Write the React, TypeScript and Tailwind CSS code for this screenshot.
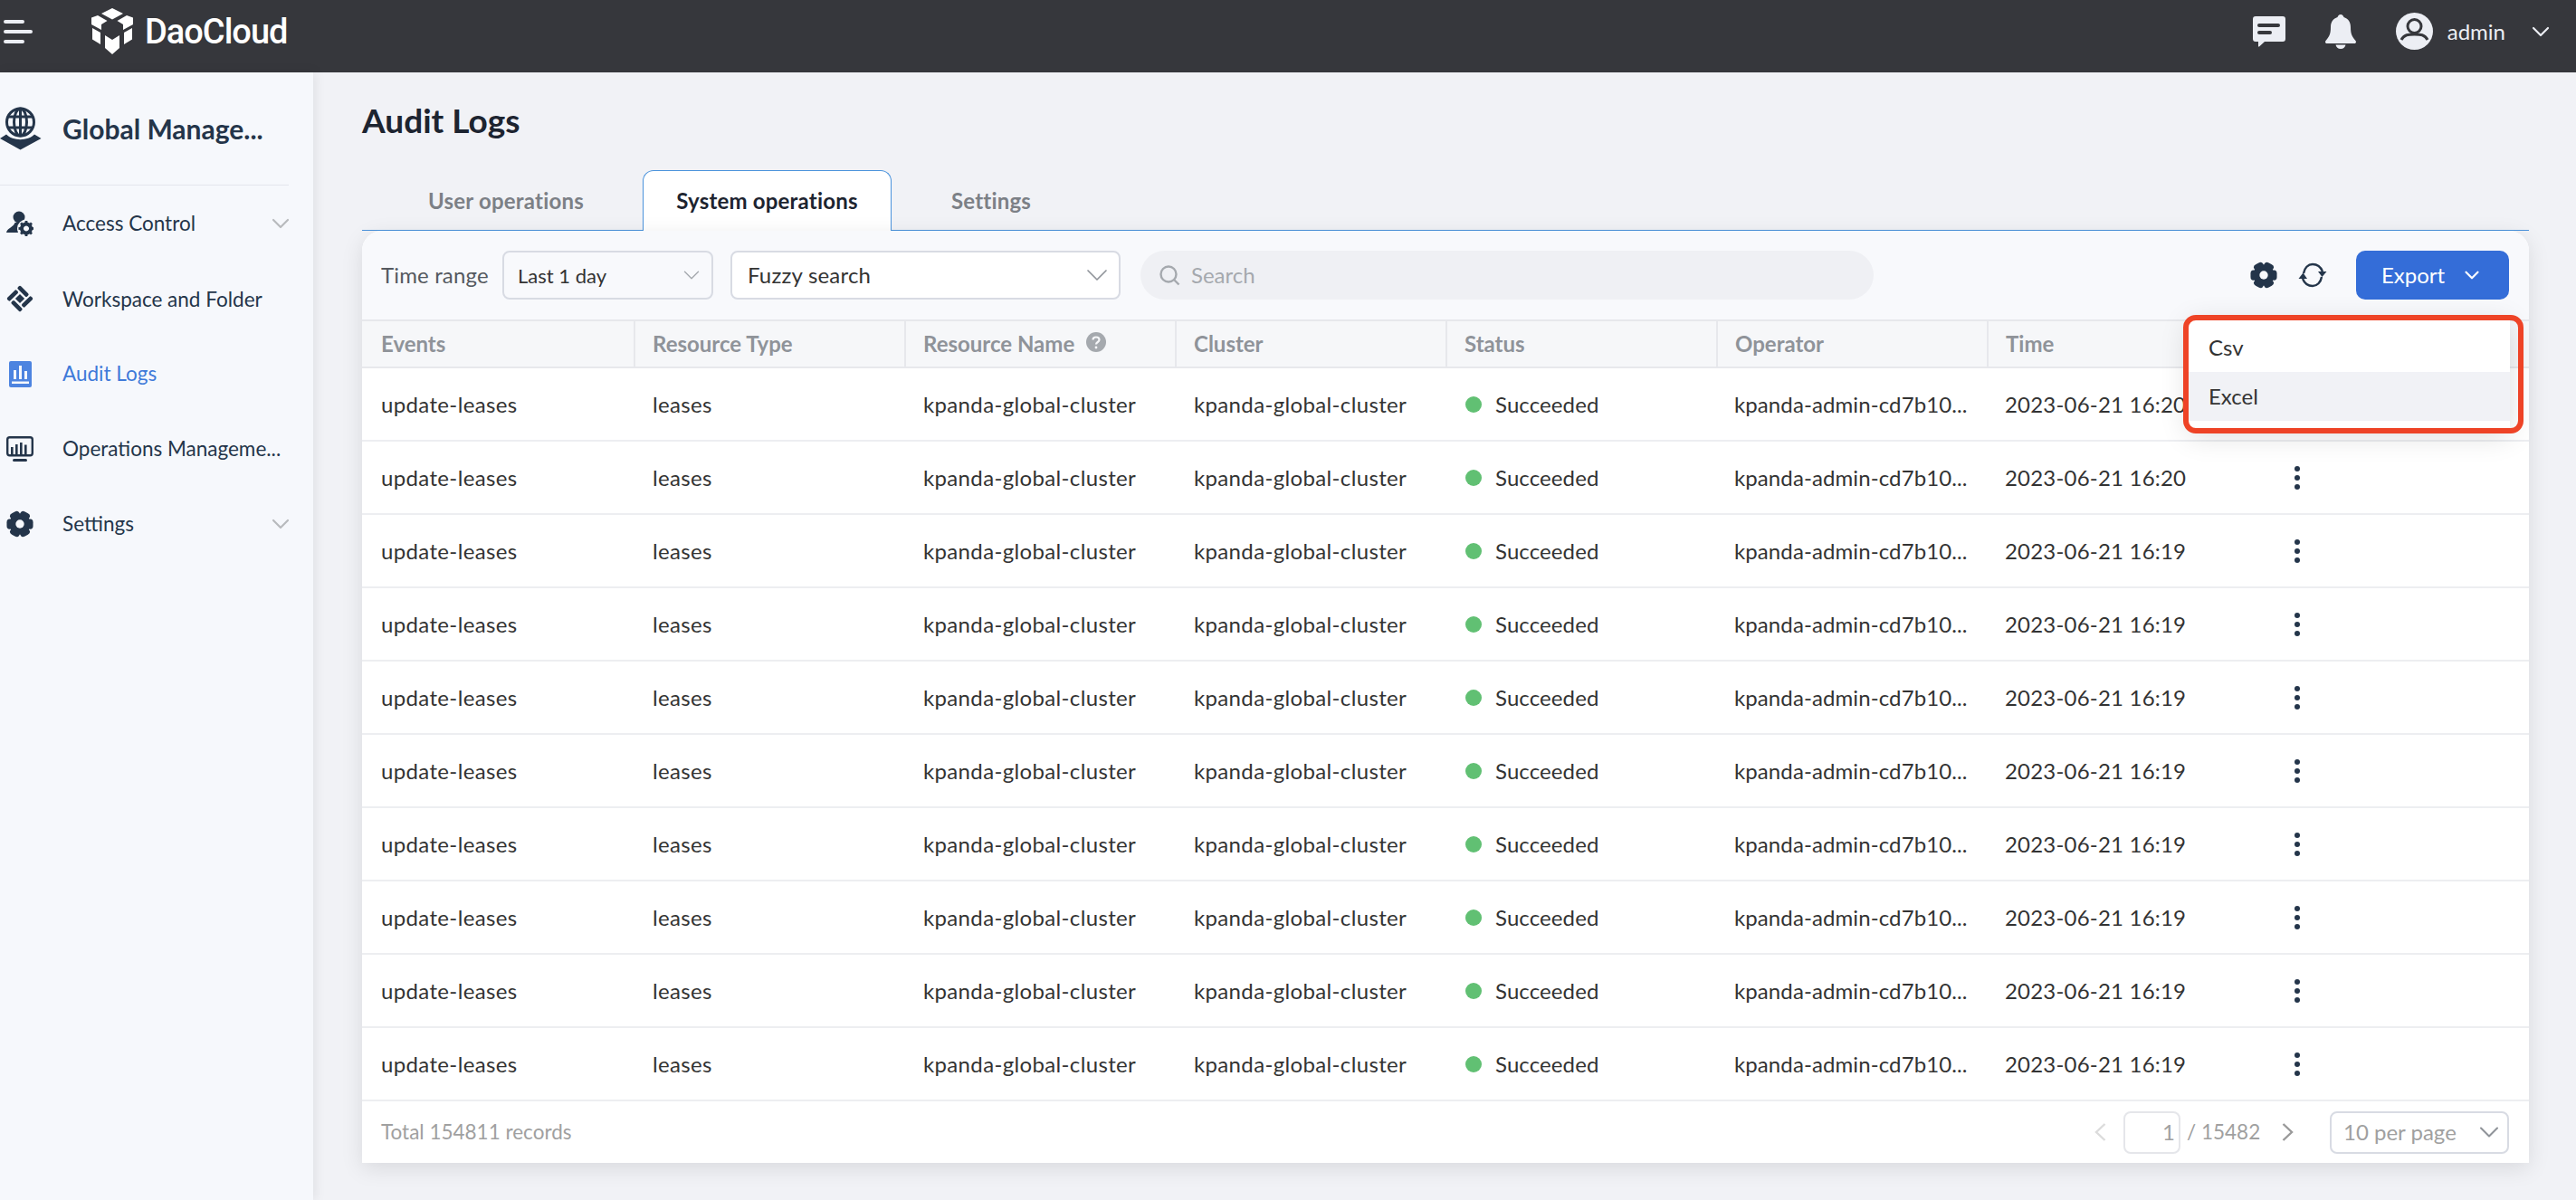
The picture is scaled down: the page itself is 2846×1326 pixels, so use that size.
import { ChevronDown } from "lucide-react";

const columns = ["Events", "Resource Type", "Resource Name", "Cluster", "Status", "Operator", "Time"];
const gridCols = "grid grid-cols-[302px_299px_299px_299px_299px_299px_299px_1fr]";

const times = [
  "2023-06-21 16:20",
  "2023-06-21 16:20",
  "2023-06-21 16:19",
  "2023-06-21 16:19",
  "2023-06-21 16:19",
  "2023-06-21 16:19",
  "2023-06-21 16:19",
  "2023-06-21 16:19",
  "2023-06-21 16:19",
  "2023-06-21 16:19",
];

const GearIcon = ({ className, hole }: { className: string; hole: string }) => (
  <svg viewBox="0 0 32 32" className={className}>
    <g fill="#24354a">
      <circle cx="16" cy="16" r="12.5" />
      {[0, 60, 120, 180, 240, 300].map((a) => (
        <rect key={a} x="25" y="10" width="6.5" height="12" rx="4" transform={`rotate(${a} 16 16)`} />
      ))}
    </g>
    <circle cx="16" cy="16" r="5" fill={hole} />
  </svg>
);

const LogoIcon = () => (
  <svg viewBox="0 0 48 52" className="w-[48px] h-[52px]" fill="#fff">
    <path d="M24 0 L36 6 L24 12.5 L12 6 Z" />
    <path d="M8 8 L18.5 14 L12 18 L12 24 L1 18 L1 10.5 Z" />
    <path d="M40 8 L47 10.5 L47 18 L36 24 L36 18 L29.5 14 Z" />
    <path d="M2 22 L11 27 L11 40 L2 34.5 Z" />
    <path d="M46 22 L46 34.5 L37 40 L37 27 Z" />
    <path d="M16 30 L24 35 L32 30 L32 44 L24 51 L16 44 Z" />
  </svg>
);

const GlobeIcon = () => (
  <svg viewBox="0 0 46 48" className="w-[46px] h-[48px]">
    <g fill="none" stroke="#24354a" strokeWidth="3">
      <circle cx="22.5" cy="17" r="15" />
      <ellipse cx="22.5" cy="17" rx="7" ry="15" />
      <path d="M9 11 H36 M9 23 H36 M22.5 2 V32" />
    </g>
    <path d="M0 35 L7 30.5 C14 38 31 38 38 30.5 L45.5 35 L22.5 47.5 Z" fill="#24354a" />
  </svg>
);

const AccessIcon = () => (
  <svg viewBox="0 0 30 28" className="w-[30px] h-[28px]">
    <circle cx="14" cy="7" r="6.5" fill="#24354a" />
    <path d="M0 24 C1 19 8 18 9.5 13 L18 13 C18.5 17 19 20 19 24 Z" fill="#24354a" />
    <circle cx="22" cy="19.5" r="10" fill="#f6f8fc" />
    <g fill="#24354a">
      <path
        d="M22 12.5 a7 7 0 1 0 0.01 0 Z M22 16.5 a3 3 0 1 1 -0.01 0 Z"
        fillRule="evenodd"
      />
      {[0, 45, 90, 135, 180, 225, 270, 315].map((a) => (
        <rect key={a} x="20.6" y="11" width="2.8" height="2.6" transform={`rotate(${a} 22 19.5)`} />
      ))}
    </g>
  </svg>
);

const WorkspaceIcon = () => (
  <svg viewBox="-15 -15 30 30" className="w-[30px] h-[30px]" fill="#24354a">
    <g transform="rotate(45)">
      <rect x="-3.6" y="-3.6" width="7.2" height="7.2" />
      <rect x="-10.5" y="-10.5" width="14.5" height="4.6" rx="1.6" />
      <rect x="5.9" y="-10.5" width="4.6" height="14.5" rx="1.6" />
      <rect x="-4" y="5.9" width="14.5" height="4.6" rx="1.6" />
      <rect x="-10.5" y="-4" width="4.6" height="14.5" rx="1.6" />
    </g>
  </svg>
);

const AuditIcon = () => (
  <svg viewBox="0 0 25 29" className="w-[25px] h-[29px]">
    <rect width="25" height="29" rx="2" fill="#4d84e0" />
    <g fill="#f6f8fc">
      <rect x="5" y="10" width="3" height="10" />
      <rect x="11" y="5" width="3" height="15" />
      <rect x="17" y="11" width="3" height="9" />
      <rect x="3" y="22.5" width="19" height="2.5" />
    </g>
  </svg>
);

const OperationsIcon = () => (
  <svg viewBox="0 0 30 28" className="w-[30px] h-[28px]">
    <rect x="1.2" y="1.2" width="27.6" height="20" rx="2.5" fill="none" stroke="#24354a" strokeWidth="2.4" />
    <g fill="#24354a">
      <rect x="5" y="12" width="2.6" height="8" />
      <rect x="10" y="9" width="2.6" height="11" />
      <rect x="15" y="7" width="2.6" height="13" />
      <rect x="20" y="9.5" width="2.6" height="10.5" />
      <rect x="7" y="25" width="16" height="3" rx="1.5" />
    </g>
  </svg>
);

const RefreshIcon = () => (
  <svg viewBox="0 0 32 28" className="w-[32px] h-[28px]" fill="none" stroke="#24354a" strokeWidth="2.4">
    <path d="M6 12 C7 6 11 2 16 2 C21 2 25 5 27 10" />
    <path d="M26 16 C25 22 21 26 16 26 C11 26 7 23 5 18" />
    <path d="M31.5 10 L26.5 16 L22 10 Z" fill="#24354a" stroke="none" />
    <path d="M0.5 18 L5.5 11.5 L10 18 Z" fill="#24354a" stroke="none" />
  </svg>
);

const HelpIcon = () => (
  <svg viewBox="0 0 22 22" className="w-[22px] h-[22px] -mt-[4px]">
    <circle cx="11" cy="11" r="11" fill="#a5a9ae" />
    <path d="M7.5 8.5 C7.5 4.5 14.5 4.5 14.5 8.5 C14.5 11 11 11 11 13.5" fill="none" stroke="#f6f7f9" strokeWidth="2.2" />
    <circle cx="11" cy="17" r="1.4" fill="#f6f7f9" />
  </svg>
);

const ChatIcon = () => (
  <svg viewBox="0 0 36 34" className="w-[36px] h-[34px]">
    <path d="M3 0 H33 C35 0 36 1 36 3 V25 C36 27 35 28 33 28 H13 L7 33.5 C6 34 6 33 6 32 V28 H3 C1 28 0 27 0 25 V3 C0 1 1 0 3 0 Z" fill="#eceef4" />
    <rect x="5" y="8" width="25" height="4" rx="2" fill="#36373c" />
    <rect x="5" y="16" width="16" height="4" rx="2" fill="#36373c" />
  </svg>
);

const BellIcon = () => (
  <svg viewBox="0 0 34 38" className="w-[34px] h-[38px]" fill="#eceef4">
    <path d="M17 0 C19 0 20 1.5 20.5 3 C25 4.5 28 8 28 14 C28 22 30 25 33.5 29 C34.5 30.5 34 32 32 32 H2 C0 32 -0.5 30.5 0.5 29 C4 25 6 22 6 14 C6 8 9 4.5 13.5 3 C14 1.5 15 0 17 0 Z" />
    <path d="M11.5 33.5 H22.5 C22 36 20 38 17 38 C14 38 12 36 11.5 33.5 Z" />
  </svg>
);

const AvatarIcon = () => (
  <svg viewBox="0 0 41 41" className="w-[41px] h-[41px]">
    <circle cx="20.5" cy="20.5" r="20.5" fill="#eceef4" />
    <circle cx="20.5" cy="15" r="7.5" fill="none" stroke="#36373c" strokeWidth="3" />
    <path d="M6 30 C9 24 14 24 20.5 24 C27 24 32 24 35 30" fill="none" stroke="#36373c" strokeWidth="3" />
  </svg>
);

const SearchIcon = () => (
  <svg viewBox="0 0 24 24" className="w-[24px] h-[24px]" fill="none" stroke="#a5a9ae" strokeWidth="2.4">
    <circle cx="11" cy="11" r="8.5" />
    <path d="M17 17 L22.5 22.5" />
  </svg>
);

const PageArrow = ({ back, color }: { back?: boolean; color: string }) => (
  <svg viewBox="0 0 14 20" className="w-[14px] h-[20px]" fill="none" stroke={color} strokeWidth="2.4">
    <path d={back ? "M12.5 1 L3 10 L12.5 19" : "M1.5 1 L11 10 L1.5 19"} />
  </svg>
);

const navItems = [
  { label: "Access Control", icon: <AccessIcon />, chevron: true },
  { label: "Workspace and Folder", icon: <WorkspaceIcon /> },
  { label: "Audit Logs", icon: <AuditIcon />, active: true },
  { label: "Operations Manageme...", icon: <OperationsIcon /> },
  { label: "Settings", icon: <GearIcon className="w-[30px] h-[30px]" hole="#f6f8fc" />, chevron: true },
];

const App = () => {
  return (
    <div className="h-[1326px] w-[2846px] overflow-hidden flex flex-col bg-[#f1f2f6] font-['Lato',sans-serif] text-[#333333]">
      {/* Header */}
      <header className="h-20 shrink-0 flex items-center pb-[11px] bg-[#36373c]">
        <div className="flex flex-col gap-[7px] pl-1 items-start">
          <span className="block h-[4px] w-[23px] rounded-full bg-[#eceef4]" />
          <span className="block h-[4px] w-[32px] rounded-full bg-[#eceef4]" />
          <span className="block h-[4px] w-[23px] rounded-full bg-[#eceef4]" />
        </div>
        <div className="ml-[64px] flex items-center gap-3">
          <LogoIcon />
          <span className="font-['Roboto',sans-serif] text-[38px] font-medium leading-none text-white tracking-[-1px]">DaoCloud</span>
        </div>
        <div className="ml-auto flex items-center">
          <ChatIcon />
          <span className="ml-[44px]">
            <BellIcon />
          </span>
          <span className="ml-[44px]">
            <AvatarIcon />
          </span>
          <span className="ml-[16px] text-[24px] text-[#eceef4]">admin</span>
          <ChevronDown className="ml-[23px] mr-[23px] w-[32px] h-[32px] text-[#eceef4]" strokeWidth={1.6} />
        </div>
      </header>

      <div className="flex flex-1 min-h-0">
        {/* Sidebar */}
        <aside className="w-[346px] shrink-0 bg-[#f6f8fc] shadow-[2px_0_12px_rgba(0,0,0,0.08)]">
          <div className="h-[125px] pr-[27px]">
            <div className="h-full flex items-center border-b border-[#e4e6ec]">
              <span className="w-[69px] shrink-0">
                <GlobeIcon />
              </span>
              <span className="text-[30px] font-bold text-[#24354a] whitespace-nowrap">Global Manage...</span>
            </div>
          </div>
          <nav className="flex flex-col">
            {navItems.map((item) => (
              <div key={item.label} className="h-[82.75px] flex items-center pr-[20px] first:h-[84px]">
                <span className="w-[69px] shrink-0 flex justify-center pr-[25px]">{item.icon}</span>
                <span className={`text-[22.5px] whitespace-nowrap ${item.active ? "text-[#3f7ad9]" : "text-[#24354a]"}`}>{item.label}</span>
                {item.chevron && <ChevronDown className="ml-auto w-[32px] h-[32px] text-[#b8babd]" strokeWidth={1.6} />}
              </div>
            ))}
          </nav>
        </aside>

        {/* Main */}
        <main className="flex-1 min-w-0 pl-[54px] pr-[52px]">
          <h1 className="h-[108px] flex items-center pb-[3px] text-[37px] font-bold text-[#1d2430]">Audit Logs</h1>

          {/* Tabs */}
          <div className="h-[67px] pl-[36px] flex gap-[28px] border-b border-[#4b93dc]">
            <div className="h-[67px] w-[246px] flex items-center justify-center text-[24px] tracking-[0.2px] font-bold text-[#7c8086]">User operations</div>
            <div className="h-[67px] w-[275px] flex items-center justify-center text-[24px] tracking-[0.2px] font-bold text-[#1d2430] bg-white border border-b-0 border-[#4b93dc] rounded-t-[12px]">System operations</div>
            <div className="h-[67px] w-[164px] flex items-center justify-center text-[24px] tracking-[0.2px] font-bold text-[#7c8086]">Settings</div>
          </div>

          {/* Panel */}
          <div className="relative bg-white rounded-t-[22px] shadow-[0_6px_24px_rgba(0,0,0,0.1)]">
            {/* Toolbar */}
            <div className="h-[98px] flex items-center pl-[21px] pr-[22px] bg-[#f8f9fc] rounded-t-[22px]">
              <span className="text-[24px] tracking-[0.15px] text-[#55595f] w-[134px] shrink-0">Time range</span>
              <div className="w-[233px] h-[54px] shrink-0 flex items-center justify-between pl-[15px] pr-[7px] border-2 border-[#d8dbe3] rounded-[8px] bg-[#f8f9fc] text-[22px]">
                Last 1 day
                <ChevronDown className="w-[30px] h-[30px] text-[#a5a9ae]" strokeWidth={1.1} />
              </div>
              <div className="ml-[19px] w-[431px] h-[54px] shrink-0 flex items-center justify-between pl-[17px] pr-[4px] border-2 border-[#d8dbe3] rounded-[8px] bg-white text-[24px] tracking-[0.2px]">
                Fuzzy search
                <ChevronDown className="w-[40px] h-[40px] text-[#8f9399]" strokeWidth={1} />
              </div>
              <div className="ml-[22px] w-[810px] h-[54px] shrink-0 flex items-center gap-[12px] px-[20px] rounded-full bg-[#eff0f4] text-[24px] text-[#a5a9ae]">
                <SearchIcon />
                Search
              </div>
              <span className="ml-auto">
                <GearIcon className="w-[30px] h-[30px]" hole="#f8f9fc" />
              </span>
              <span className="ml-[23px]">
                <RefreshIcon />
              </span>
              <div className="ml-[32px] w-[169px] h-[54px] flex items-center justify-center gap-[17px] rounded-[10px] bg-[#346dd8] text-[24px] text-white">
                Export
                <ChevronDown className="w-[26px] h-[26px]" strokeWidth={2} />
              </div>
            </div>

            {/* Table head */}
            <div className={`${gridCols} h-[54px] bg-[#f6f7f9] border-y-2 border-[#e7e8ec] items-center text-[24px] font-bold text-[#8f9399]`}>
              {columns.map((c) => (
                <div key={c} className="h-full flex items-center gap-[13px] pl-[19px] border-r-2 border-[#e7e8ec] first:pl-[21px]">
                  {c}
                  {c === "Resource Name" && <HelpIcon />}
                </div>
              ))}
              <div />
            </div>

            {/* Rows */}
            {times.map((time, i) => (
              <div key={i} className={`${gridCols} h-[81px] items-center pt-[1px] border-b-2 border-[#edeef1] bg-white text-[24px]`}>
                <div className="pl-[21px] tracking-[0.35px]">update-leases</div>
                <div className="pl-[19px] tracking-[0.35px]">leases</div>
                <div className="pl-[19px] tracking-[0.35px]">kpanda-global-cluster</div>
                <div className="pl-[19px] tracking-[0.35px]">kpanda-global-cluster</div>
                <div className="pl-[20px] flex items-center gap-[15px] tracking-[0.1px]">
                  <span className="w-[18px] h-[18px] rounded-full bg-[#61c073]" />
                  Succeeded
                </div>
                <div className="pl-[18px] whitespace-nowrap tracking-[0.1px]">kpanda-admin-cd7b10...</div>
                <div className="pl-[18px] whitespace-nowrap tracking-[0.2px]">{time}</div>
                <div className="pl-[39px] flex flex-col gap-[4px]">
                  <span className="w-[6px] h-[6px] rounded-full bg-[#24354a]" />
                  <span className="w-[6px] h-[6px] rounded-full bg-[#24354a]" />
                  <span className="w-[6px] h-[6px] rounded-full bg-[#24354a]" />
                </div>
              </div>
            ))}

            {/* Footer */}
            <div className="h-[68px] flex items-center pl-[21px] pr-[22px] bg-white text-[22.5px] text-[#a0a0a0]">
              <span>Total 154811 records</span>
              <span className="ml-auto">
                <PageArrow back color="#dcdcdc" />
              </span>
              <div className="ml-[19px] w-[63px] h-[47px] flex items-center justify-end pr-[4px] border-2 border-[#e5e6ea] rounded-[8px] text-[24px]">1</div>
              <span className="ml-[7px] w-[82px] shrink-0 whitespace-nowrap">/ 15482</span>
              <span className="ml-[23px]">
                <PageArrow color="#9a9a9a" />
              </span>
              <div className="ml-[39px] w-[198px] h-[47px] flex items-center justify-between pl-[13px] pr-[2px] border-2 border-[#d8dbe3] rounded-[8px] text-[24px]">
                10 per page
                <ChevronDown className="w-[36px] h-[36px] text-[#8f9399]" strokeWidth={1.4} />
              </div>
            </div>

            {/* Export menu */}
            <div className="absolute top-[94px] right-[21px] w-[355px] py-[8px] bg-white shadow-[0_8px_30px_rgba(0,0,0,0.14)] text-[24px]">
              <div className="h-[54px] flex items-center pl-[22px]">Csv</div>
              <div className="h-[54px] flex items-center pl-[22px] bg-[#f1f2f6]">Excel</div>
            </div>
            <div className="absolute top-[93px] right-[6px] w-[376px] h-[131px] border-[6px] border-[#ee4326] rounded-[14px]" />
          </div>
        </main>
      </div>
    </div>
  );
};

export default App;
